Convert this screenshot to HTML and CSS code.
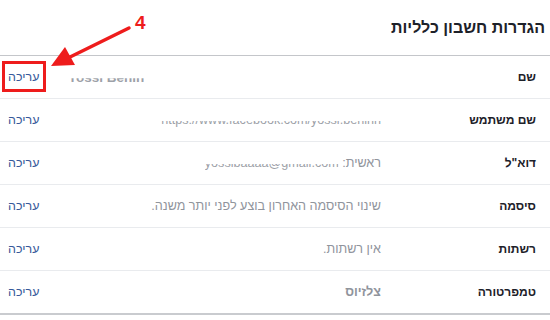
FILE: index.html
```html
<!DOCTYPE html>
<html lang="he" dir="rtl">
<head>
<meta charset="utf-8">
<link rel="stylesheet" href="styles.css">
</head>
<body>
<div class="page">
  <header class="head">
    <h1 class="title">הגדרות חשבון כלליות</h1>
  </header>
  <div class="rows">
    <div class="row">
      <div class="label">שם</div>
      <div class="value value-name"><span class="redact name" dir="ltr">Yossi Benih</span></div>
      <div class="edit"><span class="link">עריכה</span></div>
    </div>
    <div class="row">
      <div class="label">שם משתמש</div>
      <div class="value"><span class="redact" dir="ltr">https://www.facebook.com/yossi.benihh</span></div>
      <div class="edit"><span class="link">עריכה</span></div>
    </div>
    <div class="row">
      <div class="label">דוא"ל</div>
      <div class="value">ראשית: <span class="redact" dir="ltr">yossibaaaa@gmail.com</span></div>
      <div class="edit"><span class="link">עריכה</span></div>
    </div>
    <div class="row">
      <div class="label">סיסמה</div>
      <div class="value">שינוי הסיסמה האחרון בוצע לפני יותר משנה.</div>
      <div class="edit"><span class="link">עריכה</span></div>
    </div>
    <div class="row">
      <div class="label">רשתות</div>
      <div class="value">אין רשתות.</div>
      <div class="edit"><span class="link">עריכה</span></div>
    </div>
    <div class="row">
      <div class="label">טמפרטורה</div>
      <div class="value strong">צלזיוס</div>
      <div class="edit"><span class="link">עריכה</span></div>
    </div>
  </div>

  <div class="callout-box"></div>
  <div class="callout-num">4</div>
  <svg class="callout-arrow" width="550" height="320" viewBox="0 0 550 320" xmlns="http://www.w3.org/2000/svg">
    <line x1="129" y1="28" x2="66" y2="59" stroke="#ee1c1c" stroke-width="3.5" stroke-linecap="round"/>
    <polygon points="51,66 65,47 75,65" fill="#ee1c1c"/>
  </svg>
</div>
</body>
</html>
```

FILE: styles.css
```css
html, body {
  margin: 0;
  padding: 0;
  background: #ffffff;
}

body {
  font-family: "Liberation Sans", Arial, "DejaVu Sans", sans-serif;
  font-size: 12px;
  color: #1d2129;
}

.page {
  position: relative;
  width: 550px;
  height: 320px;
  overflow: hidden;
}

.head {
  height: 55px;
  display: flex;
  align-items: center;
  padding-right: 5px;
  border-bottom: 1px solid #c4c6ca;
}

.title {
  margin: 0;
  font-size: 16px;
  font-weight: bold;
  color: #1d2129;
}

.rows {
  border-bottom: 2px solid #c9cbcf;
}

.row {
  display: flex;
  align-items: center;
  height: 42px;
  border-bottom: 1px solid #e9ebee;
}

.row:last-child {
  border-bottom: none;
}

.label {
  width: 169px;
  box-sizing: border-box;
  padding-right: 14px;
  font-weight: bold;
  color: #1d2129;
  flex: none;
}

.value {
  flex: 1;
  font-size: 12.6px;
  color: #90949c;
  white-space: nowrap;
}

.value.strong {
  font-weight: bold;
}

.value-name {
  text-align: left;
  padding-left: 6px;
}

.redact {
  display: inline-block;
  clip-path: inset(58% 0 0 0);
  color: #9da1a8;
}

.redact.name {
  font-weight: bold;
  font-size: 13.5px;
}

.edit {
  width: 62px;
  flex: none;
  text-align: left;
  padding-left: 8px;
  box-sizing: border-box;
}

.link {
  font-size: 12.5px;
  color: #365899;
}

.callout-box {
  position: absolute;
  left: 2px;
  top: 61px;
  width: 44px;
  height: 31px;
  box-sizing: border-box;
  border: 3px solid #ee1c1c;
}

.callout-num {
  position: absolute;
  left: 135px;
  top: 12px;
  font-size: 19px;
  font-weight: bold;
  color: #ee1c1c;
  direction: ltr;
}

.callout-arrow {
  position: absolute;
  left: 0;
  top: 0;
  pointer-events: none;
}
```
